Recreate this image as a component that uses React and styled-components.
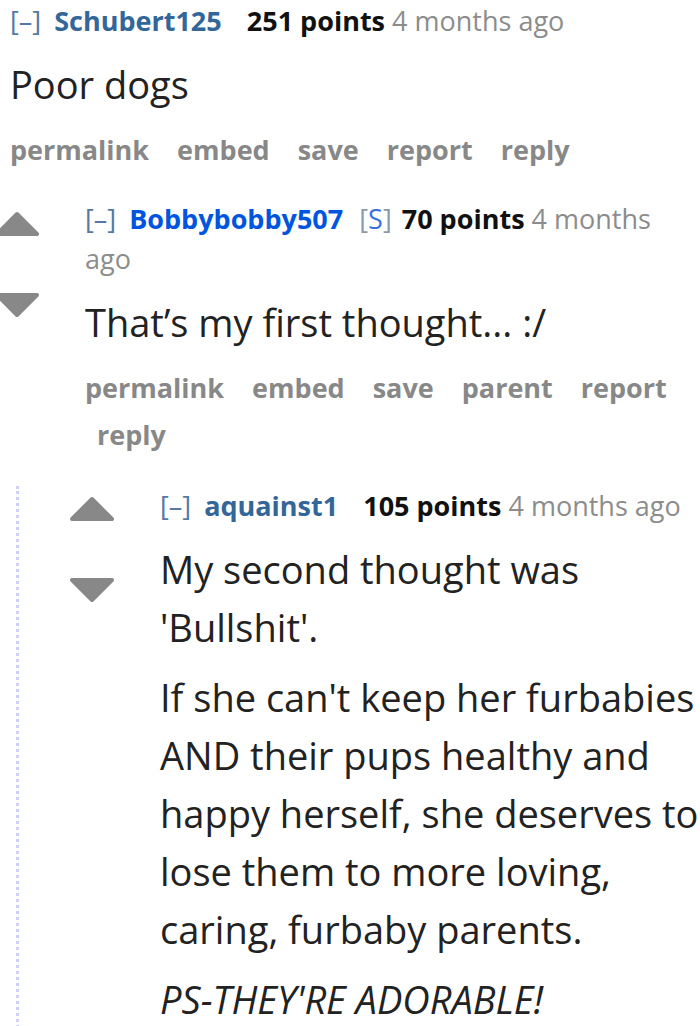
import React from 'react';
import styled, { createGlobalStyle } from 'styled-components';

const GlobalStyle = createGlobalStyle`
  html, body {
    margin: 0;
    padding: 0;
    background: #ffffff;
  }
  body {
    width: 700px;
    overflow: hidden;
    font-family: "Open Sans", "Noto Sans", "DejaVu Sans", sans-serif;
  }
`;

const Page = styled.div`
  width: 700px;
  height: 1026px;
  overflow: hidden;
  background: #fff;
`;

const TopEntry = styled.div`
  padding: 1px 0 0 10px;
  margin-bottom: 26px;
`;

const Row = styled.div`
  display: flex;
  align-items: flex-start;
`;

const Midcol = styled.div`
  flex: 0 0 ${p => p.$width}px;
  width: ${p => p.$width}px;
  overflow: hidden;
  display: flex;
  flex-direction: column;
  gap: 55px;
  padding-top: ${p => p.$top}px;

  svg {
    display: block;
    margin-left: ${p => p.$shift}px;
  }
`;

const Entry = styled.div`
  flex: 1 1 auto;
  min-width: 0;
`;

const Tagline = styled.div`
  font-size: 27px;
  line-height: 40px;
  color: #8c8c8c;
`;

const Expand = styled.span`
  color: #5479a6;
  margin-right: 13px;
`;

const Author = styled.span`
  font-weight: 700;
  color: ${p => (p.$submitter ? '#0055df' : '#336699')};
  margin-right: ${p => (p.$flair ? 16 : 25)}px;
`;

const Flair = styled.span`
  color: #8d98a8;
  margin-right: 10px;

  b {
    font-weight: 400;
    color: #3b6fe0;
  }
`;

const Score = styled.span`
  font-weight: 700;
  color: #111111;
`;

// one span per word so a wrapped time stamp doesn't make a two-line box
const TimeWord = styled.span`
  color: #8c8c8c;
`;

const Body = styled.div`
  margin-top: 14px;
  font-size: 38px;
  line-height: 58px;
  color: #222222;

  p {
    margin: 0;
  }
  p + p {
    margin-top: 12px;
  }
  em {
    font-style: italic;
  }
`;

const Buttons = styled.ul`
  list-style: none;
  margin: 13px 0 0;
  padding: 0;
  font-size: 27px;
  line-height: 47px;
  font-weight: 700;
  color: #888888;
`;

const Button = styled.li`
  display: inline-block;
  padding: 0 16px 0 12px;

  &:first-child {
    padding-left: 0;
  }
`;

const Child = styled.div`
  margin: 28px 0 0 16px;
  border-left: 3px dotted #cfd0f6;
  padding-left: 50px;
`;

const Arrow = ({ down }) => (
  <svg width="46" height="26" viewBox="0 0 46 26">
    <polygon
      points={down ? '3,3 43,3 23,23' : '3,23 23,3 43,23'}
      fill="#888888"
      stroke="#888888"
      strokeWidth="4"
      strokeLinejoin="round"
    />
  </svg>
);

const Votes = ({ width, top, shift }) => (
  <Midcol $width={width} $top={top} $shift={shift}>
    <Arrow />
    <Arrow down />
  </Midcol>
);

const Meta = ({ author, submitter, score, time }) => (
  <Tagline>
    <Expand>[–]</Expand>
    <Author $submitter={submitter} $flair={submitter}>{author}</Author>
    {submitter && (
      <Flair>
        [<b>S</b>]
      </Flair>
    )}
    <Score>{score} points</Score>
    {time.split(' ').map((word, i) => (
      <React.Fragment key={i}>
        {' '}
        <TimeWord>{word}</TimeWord>
      </React.Fragment>
    ))}
  </Tagline>
);

const ButtonList = ({ items }) => (
  <Buttons>
    {items.map(item => (
      <Button key={item}>{item}</Button>
    ))}
  </Buttons>
);

export default function App() {
  return (
    <Page>
      <GlobalStyle />
      <TopEntry>
        <Meta author="Schubert125" score={251} time="4 months ago" />
        <Body>
          <p>Poor dogs</p>
        </Body>
        <ButtonList items={['permalink', 'embed', 'save', 'report', 'reply']} />
      </TopEntry>

      <Row>
        <Votes width={85} top={12} shift={-6} />
        <Entry>
          <Meta author="Bobbybobby507" submitter score={70} time="4 months ago" />
          <Body>
            <p>That’s my first thought... :/</p>
          </Body>
          <ButtonList items={['permalink', 'embed', 'save', 'parent', 'report', 'reply']} />
        </Entry>
      </Row>

      <Child>
        <Row>
          <Votes width={91} top={10} shift={0} />
          <Entry>
            <Meta author="aquainst1" score={105} time="4 months ago" />
            <Body>
              <p>My second thought was 'Bullshit'.</p>
              <p>
                If she can't keep her furbabies AND their pups healthy and happy herself, she
                deserves to lose them to more loving, caring, furbaby parents.
              </p>
              <p>
                <em>PS-THEY'RE ADORABLE!</em>
              </p>
            </Body>
          </Entry>
        </Row>
      </Child>
    </Page>
  );
}
